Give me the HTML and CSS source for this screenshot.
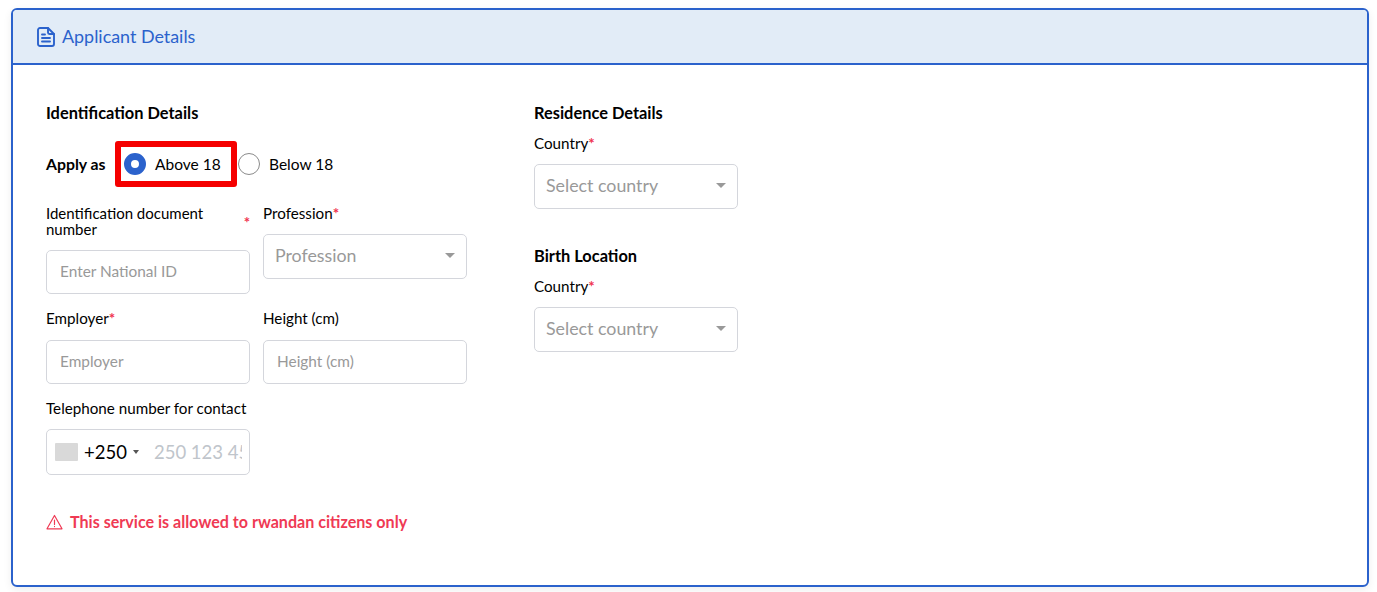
FILE: index.html
```html
<!DOCTYPE html>
<html lang="en">
<head>
<meta charset="utf-8">
<title>Applicant Details</title>
<link rel="stylesheet" href="styles.css">
</head>
<body>
<section class="card">
  <header class="card-header">
    <svg class="doc-icon" width="18" height="20" viewBox="0 0 18 20" fill="none" stroke="currentColor" stroke-width="1.9" stroke-linejoin="round" stroke-linecap="round">
      <path d="M3 1h8l6 6v10a2 2 0 0 1-2 2H3a2 2 0 0 1-2-2V3a2 2 0 0 1 2-2z"/>
      <path d="M11 1v4.500a1.500 1.500 0 0 0 1.500 1.500H17"/>
      <path d="M5 7.500h3M5 11h8M5 14.500h8"/>
    </svg>
    <h2 class="card-title">Applicant Details</h2>
  </header>
  <div class="card-body">
    <div class="column-left">
      <h3 class="section-title">Identification Details</h3>
      <div class="apply-row">
        <span class="apply-label">Apply as</span>
        <label class="radio-highlight">
          <span class="radio radio-on"></span>
          <span class="radio-text">Above 18</span>
        </label>
        <label class="radio-plain">
          <span class="radio"></span>
          <span class="radio-text">Below 18</span>
        </label>
      </div>
      <div class="field-grid">
        <div class="field">
          <div class="label label-wide"><span class="label-wrap">Identification document number</span><span class="req">*</span></div>
          <div class="input">Enter National ID</div>
        </div>
        <div class="field">
          <div class="label label-single">Profession<span class="req">*</span></div>
          <div class="select"><span>Profession</span><i class="caret"></i></div>
        </div>
        <div class="field">
          <div class="label label-row">Employer<span class="req">*</span></div>
          <div class="input">Employer</div>
        </div>
        <div class="field">
          <div class="label label-row">Height (cm)</div>
          <div class="input">Height (cm)</div>
        </div>
        <div class="field">
          <div class="label label-row label-nowrap">Telephone number for contact</div>
          <div class="phone">
            <span class="flag"></span>
            <span class="dial">+250</span>
            <i class="mini-caret"></i>
            <span class="phone-clip"><span class="phone-hint">250 123 456</span></span>
          </div>
        </div>
      </div>
      <p class="warning">
        <svg width="17" height="16" viewBox="0 0 17 16" fill="none" stroke="currentColor" stroke-width="1.200" stroke-linejoin="round" stroke-linecap="round">
          <path d="M8.500 1.500 16 14.800H1z"/>
          <path d="M8.500 6v4.500M8.500 12.400v.2"/>
        </svg>
        <span>This service is allowed to rwandan citizens only</span>
      </p>
    </div>
    <div class="column-right">
      <h3 class="section-title">Residence Details</h3>
      <div class="label label-country">Country<span class="req">*</span></div>
      <div class="select"><span>Select country</span><i class="caret"></i></div>
      <h3 class="section-title section-second">Birth Location</h3>
      <div class="label label-country">Country<span class="req">*</span></div>
      <div class="select"><span>Select country</span><i class="caret"></i></div>
    </div>
  </div>
</section>
</body>
</html>
```
FILE: styles.css
```css
* { box-sizing: border-box; }
html, body { margin: 0; height: 100%; }
body {
  padding: 8px 8px 5px 11px;
  background: #fff;
  color: #000;
  font-family: "Lato", "Liberation Sans", sans-serif;
  font-size: 15.200px;
  overflow: hidden;
}
.card {
  height: 579px;
  border: 2px solid #2b62cc;
  border-radius: 6px;
  background: #fff;
  box-shadow: 0 3px 8px rgba(0, 0, 0, .07);
  overflow: hidden;
}
.card-header {
  height: 55px;
  display: flex;
  align-items: center;
  gap: 7px;
  padding-left: 24px;
  background: #e2ecf7;
  border-bottom: 2px solid #2b62cc;
  color: #2b62cc;
}
.doc-icon { flex: none; }
.card-title { margin: 0; padding-bottom: 2px; font-size: 17.900px; font-weight: 400; }
.card-body { display: flex; gap: 67px; padding: 37px 33px 0; }
.column-left { width: 421px; }
.column-right { width: 204px; }
.section-title { height: 20px; margin: 0; padding-top: 2px; font-size: 16.400px; line-height: 18px; font-weight: 700; }
.section-second { margin-top: 36px; }
.apply-row { display: flex; align-items: center; height: 46px; margin-top: 19px; }
.apply-label { width: 69px; padding-bottom: 2px; font-size: 15.800px; font-weight: 700; }
.radio-highlight, .radio-plain { display: flex; align-items: center; gap: 9px; font-size: 15.500px; }
.radio-highlight { width: 122px; height: 46px; padding-left: 3px; border: 6px solid #f50000; border-radius: 3px; }
.radio-plain { margin-left: 1px; }
.radio { width: 22px; height: 22px; flex: none; border: 1px solid #8a8a8a; border-radius: 50%; background: #fff; }
.radio-on { border: 7px solid #2b62cc; }
.field-grid { display: grid; grid-template-columns: 204px 204px; column-gap: 13px; align-items: start; margin-top: 19px; }
.label { line-height: 15px; }
.label-wide { display: flex; justify-content: space-between; align-items: center; height: 31px; margin-bottom: 13px; font-size: 15px; line-height: 16px; }
.label-wrap { width: 180px; margin-bottom: 2px; }
.label-single { height: 20px; margin-bottom: 8px; }
.label-row { height: 16px; margin: 16px 0 14px; line-height: 16px; }
.label-nowrap { white-space: nowrap; margin-top: 16px; margin-bottom: 13px; }
.label-country { height: 16px; margin: 13px 0 13px; line-height: 16px; }
.req { color: #f0324f; font-weight: 700; }
.input, .select { height: 44px; display: flex; align-items: center; padding-bottom: 2px; border: 1px solid #d4d6dc; border-radius: 5px; background: #fff; color: #999; }
.input { padding-left: 13px; font-size: 15.400px; }
.select { justify-content: space-between; height: 45px; padding: 0 11px 4px; font-size: 17.800px; }
.caret { width: 0; height: 0; margin-top: 2px; border: 5.500px solid transparent; border-top: 5.500px solid #999; border-bottom: 0; }
.phone { height: 46px; display: flex; align-items: center; padding: 0 7px 0 8px; border: 1px solid #d4d6dc; border-radius: 5px; }
.flag { width: 23px; height: 18px; flex: none; background: #d9d9d9; border-radius: 1px; }
.dial { margin-left: 6px; font-size: 18.500px; }
.mini-caret { flex: none; width: 0; height: 0; margin-left: 6px; border: 3px solid transparent; border-top: 4px solid #555; border-bottom: 0; }
.phone-clip { overflow: hidden; margin-left: 15px; flex: 1; white-space: nowrap; }
.phone-hint { font-size: 18.500px; color: #c0c5cb; }
.warning { display: flex; align-items: center; gap: 7px; margin: 37px 0 0; color: #ef3a54; font-size: 16.100px; font-weight: 700; }
```
